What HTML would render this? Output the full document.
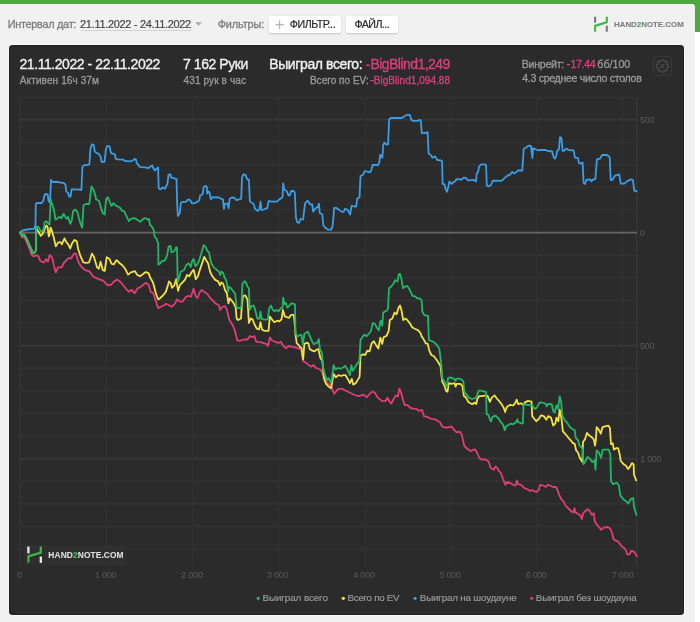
<!DOCTYPE html>
<html><head><meta charset="utf-8">
<style>
*{margin:0;padding:0;box-sizing:border-box}
html,body{width:700px;height:622px;overflow:hidden;background:#fff;font-family:"Liberation Sans",sans-serif}
.abs{position:absolute;white-space:nowrap}
#topbar{position:absolute;left:0;top:0;width:700px;height:4px;background:#4caa3c}
#rightgreen{position:absolute;left:688px;top:0;width:12px;height:31.5px;background:#4caa3c}
#light{position:absolute;left:0;top:3.6px;width:695px;height:618.4px;background:#f1f1f1;border-top-right-radius:3.5px;box-shadow:inset 0 1px 0 #fcfcfc}
.lbl{color:#8a8a8a;font-size:11px}
.btn{position:absolute;background:#fff;border-radius:2px;box-shadow:0 1px 2px rgba(0,0,0,.18)}
#panel{position:absolute;left:9px;top:45px;width:675px;height:570px;background:#2b2b2b;border-radius:4px;box-shadow:0 0 0 1px rgba(255,255,255,.6),inset 0 0 1px 0.6px #1f1f1f}
.w{color:#eeeeee}
.g{color:#9a9a9a}
.p{color:#e0457c}
.xl{position:absolute;top:569px;transform:translateX(-50%);color:#5c5c5c;font-size:9px;white-space:nowrap}
.yl{position:absolute;left:641px;color:#5c5c5c;font-size:9px;white-space:nowrap}
.lg{position:absolute;top:593px;font-size:9.4px;color:#9c9c9c;white-space:nowrap}
.dot{display:inline-block;width:3.5px;height:3.5px;border-radius:50%;vertical-align:middle;margin-right:3px;position:relative;top:-1px}
</style></head><body>
<div id="topbar"></div>
<div id="rightgreen"></div>
<div id="light"></div>

<div class="abs" style="left:81px;top:29.5px;width:109.5px;height:1.3px;background:#d2d2d2"></div>
<svg class="abs" style="left:195px;top:22px" width="8" height="5"><path d="M0 0 L7 0 L3.5 4 Z" fill="#b0b0b0"/></svg>
<div class="btn" style="left:269px;top:16px;width:72px;height:17px"></div>
<svg class="abs" style="left:275px;top:19.8px" width="10" height="10"><path d="M4.7 0.5 V9 M0.5 4.7 H9" stroke="#a5a5a5" stroke-width="1"/></svg>
<div class="btn" style="left:346px;top:16px;width:52px;height:17px"></div>

<svg class="abs" style="left:590px;top:14px" width="22" height="20">
<path d="M5.1 2.7 V8.7" stroke="#7a7a7a" stroke-width="2.1"/>
<path d="M16.8 17.7 V11.7" stroke="#7a7a7a" stroke-width="2.1"/>
<path d="M5.1 17.7 V11.9 L16.8 8.3 V2.7" stroke="#3cb54a" stroke-width="2.1" fill="none"/>
</svg>

<div id="panel"></div>
<div class="abs" style="left:653.3px;top:56.2px;width:19px;height:19.4px;border:1.5px solid #383838;border-radius:2.5px"></div>
<svg class="abs" style="left:0;top:0" width="700" height="622"><path d="M668.60 66.00 L668.60 66.08 L668.59 66.16 L668.58 66.24 L668.57 66.32 L668.55 66.40 L668.53 66.47 L668.50 66.55 L668.48 66.63 L668.44 66.70 L668.41 66.78 L668.36 66.85 L668.32 66.92 L668.27 66.99 L668.22 67.06 L668.17 67.13 L668.11 67.19 L668.04 67.25 L667.98 67.32 L667.91 67.37 L667.84 67.43 L667.76 67.48 L667.68 67.53 L667.59 67.58 L667.50 67.63 L667.41 67.67 L667.31 67.70 L667.20 67.73 L667.08 67.76 L666.95 67.78 L666.75 67.76 L666.90 67.89 L666.98 68.00 L667.05 68.10 L667.10 68.20 L667.15 68.29 L667.19 68.39 L667.22 68.48 L667.24 68.58 L667.27 68.67 L667.28 68.76 L667.30 68.85 L667.30 68.94 L667.31 69.03 L667.31 69.12 L667.30 69.21 L667.30 69.30 L667.28 69.38 L667.27 69.46 L667.25 69.55 L667.23 69.63 L667.20 69.70 L667.17 69.78 L667.14 69.86 L667.10 69.93 L667.06 70.00 L667.02 70.07 L666.97 70.13 L666.92 70.20 L666.87 70.26 L666.81 70.31 L666.76 70.37 L666.70 70.42 L666.63 70.47 L666.57 70.52 L666.50 70.56 L666.43 70.60 L666.36 70.64 L666.28 70.67 L666.20 70.70 L666.13 70.73 L666.05 70.75 L665.96 70.77 L665.88 70.78 L665.80 70.80 L665.71 70.80 L665.62 70.81 L665.53 70.81 L665.44 70.80 L665.35 70.80 L665.26 70.78 L665.17 70.77 L665.08 70.74 L664.98 70.72 L664.89 70.69 L664.79 70.65 L664.70 70.60 L664.60 70.55 L664.50 70.48 L664.39 70.40 L664.26 70.25 L664.28 70.45 L664.26 70.58 L664.23 70.70 L664.20 70.81 L664.17 70.91 L664.13 71.00 L664.08 71.09 L664.03 71.18 L663.98 71.26 L663.93 71.34 L663.87 71.41 L663.82 71.48 L663.75 71.54 L663.69 71.61 L663.63 71.67 L663.56 71.72 L663.49 71.77 L663.42 71.82 L663.35 71.86 L663.28 71.91 L663.20 71.94 L663.13 71.98 L663.05 72.00 L662.97 72.03 L662.90 72.05 L662.82 72.07 L662.74 72.08 L662.66 72.09 L662.58 72.10 L662.50 72.10 L662.42 72.10 L662.34 72.09 L662.26 72.08 L662.18 72.07 L662.10 72.05 L662.03 72.03 L661.95 72.00 L661.87 71.98 L661.80 71.94 L661.72 71.91 L661.65 71.86 L661.58 71.82 L661.51 71.77 L661.44 71.72 L661.37 71.67 L661.31 71.61 L661.25 71.54 L661.18 71.48 L661.13 71.41 L661.07 71.34 L661.02 71.26 L660.97 71.18 L660.92 71.09 L660.87 71.00 L660.83 70.91 L660.80 70.81 L660.77 70.70 L660.74 70.58 L660.72 70.45 L660.74 70.25 L660.61 70.40 L660.50 70.48 L660.40 70.55 L660.30 70.60 L660.21 70.65 L660.11 70.69 L660.02 70.72 L659.92 70.74 L659.83 70.77 L659.74 70.78 L659.65 70.80 L659.56 70.80 L659.47 70.81 L659.38 70.81 L659.29 70.80 L659.20 70.80 L659.12 70.78 L659.04 70.77 L658.95 70.75 L658.87 70.73 L658.80 70.70 L658.72 70.67 L658.64 70.64 L658.57 70.60 L658.50 70.56 L658.43 70.52 L658.37 70.47 L658.30 70.42 L658.24 70.37 L658.19 70.31 L658.13 70.26 L658.08 70.20 L658.03 70.13 L657.98 70.07 L657.94 70.00 L657.90 69.93 L657.86 69.86 L657.83 69.78 L657.80 69.70 L657.77 69.63 L657.75 69.55 L657.73 69.46 L657.72 69.38 L657.70 69.30 L657.70 69.21 L657.69 69.12 L657.69 69.03 L657.70 68.94 L657.70 68.85 L657.72 68.76 L657.73 68.67 L657.76 68.58 L657.78 68.48 L657.81 68.39 L657.85 68.29 L657.90 68.20 L657.95 68.10 L658.02 68.00 L658.10 67.89 L658.25 67.76 L658.05 67.78 L657.92 67.76 L657.80 67.73 L657.69 67.70 L657.59 67.67 L657.50 67.63 L657.41 67.58 L657.32 67.53 L657.24 67.48 L657.16 67.43 L657.09 67.37 L657.02 67.32 L656.96 67.25 L656.89 67.19 L656.83 67.13 L656.78 67.06 L656.73 66.99 L656.68 66.92 L656.64 66.85 L656.59 66.78 L656.56 66.70 L656.52 66.63 L656.50 66.55 L656.47 66.47 L656.45 66.40 L656.43 66.32 L656.42 66.24 L656.41 66.16 L656.40 66.08 L656.40 66.00 L656.40 65.92 L656.41 65.84 L656.42 65.76 L656.43 65.68 L656.45 65.60 L656.47 65.53 L656.50 65.45 L656.52 65.37 L656.56 65.30 L656.59 65.22 L656.64 65.15 L656.68 65.08 L656.73 65.01 L656.78 64.94 L656.83 64.87 L656.89 64.81 L656.96 64.75 L657.02 64.68 L657.09 64.63 L657.16 64.57 L657.24 64.52 L657.32 64.47 L657.41 64.42 L657.50 64.37 L657.59 64.33 L657.69 64.30 L657.80 64.27 L657.92 64.24 L658.05 64.22 L658.25 64.24 L658.10 64.11 L658.02 64.00 L657.95 63.90 L657.90 63.80 L657.85 63.71 L657.81 63.61 L657.78 63.52 L657.76 63.42 L657.73 63.33 L657.72 63.24 L657.70 63.15 L657.70 63.06 L657.69 62.97 L657.69 62.88 L657.70 62.79 L657.70 62.70 L657.72 62.62 L657.73 62.54 L657.75 62.45 L657.77 62.37 L657.80 62.30 L657.83 62.22 L657.86 62.14 L657.90 62.07 L657.94 62.00 L657.98 61.93 L658.03 61.87 L658.08 61.80 L658.13 61.74 L658.19 61.69 L658.24 61.63 L658.30 61.58 L658.37 61.53 L658.43 61.48 L658.50 61.44 L658.57 61.40 L658.64 61.36 L658.72 61.33 L658.80 61.30 L658.87 61.27 L658.95 61.25 L659.04 61.23 L659.12 61.22 L659.20 61.20 L659.29 61.20 L659.38 61.19 L659.47 61.19 L659.56 61.20 L659.65 61.20 L659.74 61.22 L659.83 61.23 L659.92 61.26 L660.02 61.28 L660.11 61.31 L660.21 61.35 L660.30 61.40 L660.40 61.45 L660.50 61.52 L660.61 61.60 L660.74 61.75 L660.72 61.55 L660.74 61.42 L660.77 61.30 L660.80 61.19 L660.83 61.09 L660.87 61.00 L660.92 60.91 L660.97 60.82 L661.02 60.74 L661.07 60.66 L661.13 60.59 L661.18 60.52 L661.25 60.46 L661.31 60.39 L661.37 60.33 L661.44 60.28 L661.51 60.23 L661.58 60.18 L661.65 60.14 L661.72 60.09 L661.80 60.06 L661.87 60.02 L661.95 60.00 L662.03 59.97 L662.10 59.95 L662.18 59.93 L662.26 59.92 L662.34 59.91 L662.42 59.90 L662.50 59.90 L662.58 59.90 L662.66 59.91 L662.74 59.92 L662.82 59.93 L662.90 59.95 L662.97 59.97 L663.05 60.00 L663.13 60.02 L663.20 60.06 L663.28 60.09 L663.35 60.14 L663.42 60.18 L663.49 60.23 L663.56 60.28 L663.63 60.33 L663.69 60.39 L663.75 60.46 L663.82 60.52 L663.87 60.59 L663.93 60.66 L663.98 60.74 L664.03 60.82 L664.08 60.91 L664.13 61.00 L664.17 61.09 L664.20 61.19 L664.23 61.30 L664.26 61.42 L664.28 61.55 L664.26 61.75 L664.39 61.60 L664.50 61.52 L664.60 61.45 L664.70 61.40 L664.79 61.35 L664.89 61.31 L664.98 61.28 L665.08 61.26 L665.17 61.23 L665.26 61.22 L665.35 61.20 L665.44 61.20 L665.53 61.19 L665.62 61.19 L665.71 61.20 L665.80 61.20 L665.88 61.22 L665.96 61.23 L666.05 61.25 L666.13 61.27 L666.20 61.30 L666.28 61.33 L666.36 61.36 L666.43 61.40 L666.50 61.44 L666.57 61.48 L666.63 61.53 L666.70 61.58 L666.76 61.63 L666.81 61.69 L666.87 61.74 L666.92 61.80 L666.97 61.87 L667.02 61.93 L667.06 62.00 L667.10 62.07 L667.14 62.14 L667.17 62.22 L667.20 62.30 L667.23 62.37 L667.25 62.45 L667.27 62.54 L667.28 62.62 L667.30 62.70 L667.30 62.79 L667.31 62.88 L667.31 62.97 L667.30 63.06 L667.30 63.15 L667.28 63.24 L667.27 63.33 L667.24 63.42 L667.22 63.52 L667.19 63.61 L667.15 63.71 L667.10 63.80 L667.05 63.90 L666.98 64.00 L666.90 64.11 L666.75 64.24 L666.95 64.22 L667.08 64.24 L667.20 64.27 L667.31 64.30 L667.41 64.33 L667.50 64.37 L667.59 64.42 L667.68 64.47 L667.76 64.52 L667.84 64.57 L667.91 64.63 L667.98 64.68 L668.04 64.75 L668.11 64.81 L668.17 64.87 L668.22 64.94 L668.27 65.01 L668.32 65.08 L668.36 65.15 L668.41 65.22 L668.44 65.30 L668.48 65.37 L668.50 65.45 L668.53 65.53 L668.55 65.60 L668.57 65.68 L668.58 65.76 L668.59 65.84 L668.60 65.92Z" fill="none" stroke="#4a4a4a" stroke-width="1.3" stroke-linejoin="round"/><circle cx="662.5" cy="66" r="1.5" fill="none" stroke="#4a4a4a" stroke-width="1.2"/></svg>

<svg class="abs" style="left:0;top:0" width="700" height="622">
<line x1="20.4" x2="20.4" y1="97.4" y2="566.6" stroke="#333" stroke-width="1.5"/>
<line x1="636.8" x2="636.8" y1="97.4" y2="566.6" stroke="#353535" stroke-width="1.6"/>
<line x1="20.4" x2="637" y1="97.6" y2="97.6" stroke="#333" stroke-width="1.5"/>
<line x1="20" x2="637" y1="119.6" y2="119.6" stroke="#383838" stroke-width="1.6"/>
<line x1="20" x2="637" y1="142.2" y2="142.2" stroke="#323232" stroke-width="1.6"/>
<line x1="20" x2="637" y1="164.8" y2="164.8" stroke="#323232" stroke-width="1.6"/>
<line x1="20" x2="637" y1="187.4" y2="187.4" stroke="#323232" stroke-width="1.6"/>
<line x1="20" x2="637" y1="210.0" y2="210.0" stroke="#323232" stroke-width="1.6"/>
<line x1="20" x2="637" y1="255.2" y2="255.2" stroke="#323232" stroke-width="1.6"/>
<line x1="20" x2="637" y1="277.8" y2="277.8" stroke="#323232" stroke-width="1.6"/>
<line x1="20" x2="637" y1="300.4" y2="300.4" stroke="#323232" stroke-width="1.6"/>
<line x1="20" x2="637" y1="323.0" y2="323.0" stroke="#323232" stroke-width="1.6"/>
<line x1="20" x2="637" y1="345.6" y2="345.6" stroke="#383838" stroke-width="1.6"/>
<line x1="20" x2="637" y1="368.2" y2="368.2" stroke="#323232" stroke-width="1.6"/>
<line x1="20" x2="637" y1="390.8" y2="390.8" stroke="#323232" stroke-width="1.6"/>
<line x1="20" x2="637" y1="413.4" y2="413.4" stroke="#323232" stroke-width="1.6"/>
<line x1="20" x2="637" y1="436.0" y2="436.0" stroke="#323232" stroke-width="1.6"/>
<line x1="20" x2="637" y1="458.6" y2="458.6" stroke="#383838" stroke-width="1.6"/>
<line x1="20" x2="637" y1="481.2" y2="481.2" stroke="#323232" stroke-width="1.6"/>
<line x1="20" x2="637" y1="503.8" y2="503.8" stroke="#323232" stroke-width="1.6"/>
<line x1="20" x2="637" y1="526.4" y2="526.4" stroke="#323232" stroke-width="1.6"/>
<line x1="20" x2="637" y1="549.0" y2="549.0" stroke="#323232" stroke-width="1.6"/>
<line x1="106.47" x2="106.47" y1="97" y2="566.6" stroke="#303030" stroke-width="1.5"/>
<line x1="192.54" x2="192.54" y1="97" y2="566.6" stroke="#303030" stroke-width="1.5"/>
<line x1="278.61" x2="278.61" y1="97" y2="566.6" stroke="#303030" stroke-width="1.5"/>
<line x1="364.68" x2="364.68" y1="97" y2="566.6" stroke="#303030" stroke-width="1.5"/>
<line x1="450.75" x2="450.75" y1="97" y2="566.6" stroke="#303030" stroke-width="1.5"/>
<line x1="536.82" x2="536.82" y1="97" y2="566.6" stroke="#303030" stroke-width="1.5"/>
<line x1="622.89" x2="622.89" y1="97" y2="566.6" stroke="#303030" stroke-width="1.5"/>
<line x1="20" x2="637" y1="232.6" y2="232.6" stroke="#676767" stroke-width="1.9"/>
<rect x="24" y="544.5" width="103" height="21" fill="#2f2f2f"/>
<path d="M20.2 232.3 L23.0 230.3 L27.1 229.5 L34.3 228.7 L35.5 225.0 L35.8 203.7 L37.2 203.0 L41.6 203.0 L43.3 200.8 L44.5 195.0 L45.9 194.0 L47.7 194.3 L48.5 200.8 L49.5 202.3 L50.3 195.8 L51.0 179.9 L51.7 181.0 L53.2 182.0 L58.9 182.0 L60.4 182.7 L64.0 183.0 L65.5 184.9 L66.2 191.4 L67.9 192.9 L69.1 196.5 L70.5 196.5 L71.7 189.3 L73.4 189.3 L79.9 189.7 L81.4 190.0 L82.4 166.8 L83.8 165.4 L89.3 164.7 L90.5 148.7 L91.9 144.4 L93.7 144.8 L94.8 151.6 L96.8 153.1 L98.7 153.8 L100.6 156.7 L101.6 161.8 L104.5 161.8 L106.0 148.7 L107.4 145.9 L109.6 146.3 L111.0 153.1 L113.6 153.8 L115.0 154.5 L115.7 158.9 L117.9 159.3 L123.0 159.6 L125.1 161.0 L130.9 161.3 L133.1 160.3 L134.5 158.9 L136.0 159.6 L136.7 163.2 L138.2 164.7 L139.6 166.8 L141.8 167.1 L146.8 167.6 L148.3 168.3 L150.5 166.5 L152.3 165.4 L153.3 168.3 L154.8 170.5 L157.0 168.3 L158.1 167.6 L158.7 188.5 L160.6 189.3 L162.7 187.4 L164.9 188.8 L166.4 185.6 L167.4 184.2 L168.5 174.8 L170.3 174.1 L171.4 177.7 L173.6 178.1 L176.5 179.1 L177.2 204.5 L177.9 216.0 L179.8 213.1 L180.8 203.0 L183.0 201.8 L185.9 201.8 L188.1 199.4 L190.2 200.1 L191.7 203.0 L193.9 203.3 L197.5 201.8 L199.2 200.4 L200.0 195.8 L201.4 195.0 L202.9 193.6 L203.6 187.1 L205.8 185.9 L206.9 187.1 L207.2 193.6 L208.4 191.4 L209.4 192.2 L210.9 199.4 L212.3 197.2 L218.8 197.5 L221.0 198.7 L222.9 199.4 L223.9 208.8 L224.9 203.7 L227.5 203.7 L228.6 208.1 L229.7 198.7 L231.8 197.5 L234.7 197.9 L236.2 200.1 L239.1 199.4 L241.2 198.7 L242.0 177.7 L243.4 174.4 L245.6 174.8 L247.0 179.1 L248.9 179.9 L249.9 201.6 L252.1 203.0 L253.5 203.7 L255.0 208.8 L257.9 211.0 L259.3 209.5 L260.5 201.6 L261.5 210.2 L263.7 209.5 L267.3 208.1 L268.7 200.8 L271.6 201.6 L276.7 201.6 L279.3 199.4 L282.5 197.2 L283.2 183.5 L284.2 189.3 L285.0 189.9 L286.7 191.0 L288.6 195.6 L290.1 194.9 L291.1 191.0 L293.7 191.0 L294.8 192.7 L295.9 217.3 L297.3 222.4 L299.2 222.8 L300.6 218.8 L303.1 219.5 L305.0 203.6 L307.4 200.7 L308.9 202.2 L309.9 204.3 L312.2 204.3 L313.2 211.6 L314.7 209.4 L316.1 207.9 L318.0 206.9 L319.0 203.6 L319.7 213.0 L322.3 214.2 L323.3 225.3 L325.5 227.8 L327.7 229.6 L331.3 229.6 L332.7 225.3 L334.2 207.9 L336.4 207.9 L338.5 209.4 L341.4 211.6 L343.6 211.8 L345.0 208.7 L347.9 210.1 L350.1 214.5 L351.6 205.8 L354.2 206.5 L356.2 206.5 L357.3 198.5 L359.5 197.4 L360.5 176.1 L363.1 174.7 L364.9 171.0 L368.2 171.8 L370.0 172.3 L371.4 170.1 L372.6 165.0 L378.0 165.0 L379.4 162.2 L380.1 154.9 L381.3 155.6 L382.3 157.8 L383.3 144.8 L384.5 142.6 L386.2 144.4 L388.1 144.4 L389.1 119.5 L391.0 118.0 L401.8 118.0 L404.0 116.6 L406.9 114.8 L409.8 114.8 L411.2 119.5 L412.7 120.9 L417.7 120.9 L419.9 119.8 L420.9 120.9 L421.8 133.2 L424.3 133.2 L427.6 132.2 L428.6 153.5 L430.8 154.9 L432.5 157.8 L435.1 156.4 L437.3 160.0 L440.9 160.3 L442.1 161.4 L442.6 183.9 L444.5 184.3 L445.5 188.9 L447.0 191.8 L448.4 186.8 L449.3 181.7 L451.8 183.9 L453.9 181.7 L455.0 181.4 L456.4 179.2 L461.5 179.5 L463.7 177.7 L465.9 178.0 L468.0 180.4 L473.8 179.9 L476.0 181.4 L476.7 173.4 L478.2 172.0 L478.9 166.9 L481.0 164.4 L485.4 164.4 L486.1 166.2 L486.8 185.7 L489.0 186.4 L490.9 185.0 L492.9 180.6 L501.3 180.9 L503.5 179.2 L505.6 177.0 L507.8 175.6 L510.0 174.6 L512.2 172.0 L514.3 173.4 L516.5 172.0 L517.9 170.5 L522.3 170.5 L523.7 148.8 L525.9 147.7 L528.8 145.6 L531.0 145.9 L532.4 158.2 L533.1 148.1 L536.0 149.5 L538.2 150.3 L540.0 150.0 L545.7 150.0 L547.9 151.0 L552.1 151.4 L553.6 157.1 L555.0 158.6 L556.4 155.7 L557.1 150.7 L558.9 149.6 L560.0 137.1 L561.4 137.9 L562.6 150.7 L563.6 151.0 L566.4 148.6 L568.6 150.0 L573.6 150.4 L575.0 157.6 L577.9 157.9 L578.9 162.9 L580.7 163.6 L582.6 162.4 L583.6 182.9 L585.0 183.9 L586.4 180.0 L590.0 179.3 L591.4 181.4 L592.9 179.6 L595.4 179.0 L596.9 159.3 L600.0 158.6 L602.1 155.0 L607.1 155.0 L609.7 157.1 L610.7 180.0 L612.1 180.0 L615.0 175.7 L619.3 174.3 L620.7 183.6 L624.3 183.6 L627.1 181.4 L630.7 179.3 L632.9 180.0 L634.3 190.7 L636.4 191.4 L636.6 191.1" fill="none" stroke="#3a9de8" stroke-width="1.8" stroke-linejoin="round" stroke-linecap="round"/>
<path d="M20.2 232.3 L22.2 237.1 L24.6 237.5 L27.1 243.1 L29.5 248.8 L31.5 254.4 L33.5 256.4 L36.7 255.2 L38.7 256.8 L40.3 260.8 L42.3 262.0 L44.3 262.4 L45.9 259.2 L47.9 261.6 L49.6 255.2 L50.0 255.0 L52.2 257.9 L54.1 265.9 L55.8 272.4 L58.0 267.3 L61.6 267.3 L63.7 263.0 L66.6 260.1 L68.8 257.9 L71.0 258.7 L73.9 253.6 L76.0 253.6 L77.5 259.4 L78.9 263.0 L81.8 267.3 L85.5 270.2 L89.8 271.7 L92.7 276.0 L96.3 278.2 L99.9 279.6 L102.8 280.4 L105.0 282.5 L107.2 285.0 L110.8 285.0 L114.4 281.1 L117.3 279.6 L120.2 281.8 L122.3 284.0 L123.0 285.0 L126.0 288.8 L128.8 291.7 L131.7 289.8 L134.5 293.1 L135.0 292.9 L137.2 288.6 L140.1 287.2 L143.0 285.0 L145.9 282.8 L148.7 285.0 L150.9 292.2 L153.1 292.9 L155.3 299.5 L158.2 308.1 L161.0 306.7 L163.9 305.2 L166.1 303.8 L169.0 305.2 L171.9 306.7 L174.8 303.8 L177.0 299.5 L179.9 301.6 L182.7 301.6 L185.6 297.3 L188.5 295.8 L191.1 296.6 L193.6 288.6 L195.5 295.8 L197.5 298.0 L199.8 292.2 L201.8 290.0 L204.5 292.2 L207.3 293.7 L210.2 298.0 L213.1 300.9 L216.0 303.8 L218.9 305.2 L220.0 309.9 L222.2 307.0 L225.1 306.2 L226.9 309.9 L229.4 320.0 L233.0 325.8 L235.2 331.6 L237.1 340.2 L239.5 341.0 L243.9 339.5 L247.5 339.5 L250.1 335.9 L252.1 337.3 L254.4 335.9 L256.2 341.7 L261.2 342.4 L266.3 343.9 L268.0 346.0 L269.9 337.3 L271.8 340.2 L275.0 341.7 L278.6 343.1 L280.8 341.7 L282.9 345.3 L285.8 348.2 L288.7 346.0 L292.3 346.8 L296.0 347.5 L299.3 348.9 L300.0 347.7 L301.4 349.9 L302.9 360.8 L305.1 362.2 L308.0 364.4 L310.9 366.6 L313.7 365.1 L315.9 368.0 L320.3 369.5 L321.7 371.6 L323.9 376.7 L326.0 381.8 L328.2 383.9 L331.1 385.4 L332.6 390.0 L334.3 393.9 L337.6 389.4 L342.2 388.7 L345.5 390.5 L350.0 392.8 L354.5 395.0 L359.0 396.2 L363.5 394.6 L366.9 397.3 L370.0 393.5 L372.3 391.6 L374.8 392.5 L376.8 396.4 L379.6 399.3 L382.5 401.2 L385.4 401.2 L387.4 397.8 L389.3 401.2 L391.2 403.5 L394.1 398.3 L396.0 395.4 L398.0 396.4 L399.3 388.7 L400.9 391.6 L402.8 399.3 L404.7 405.1 L407.6 405.1 L410.5 408.0 L413.4 408.6 L416.3 408.9 L419.2 410.9 L422.1 409.9 L424.0 416.3 L426.9 416.7 L430.8 418.6 L435.6 419.6 L438.5 421.5 L440.0 422.2 L442.2 426.5 L444.3 427.5 L447.2 427.5 L451.6 426.5 L453.7 429.4 L456.6 432.3 L459.5 431.6 L461.7 434.5 L464.3 446.0 L466.8 448.2 L470.4 451.1 L474.0 449.6 L475.0 449.3 L477.2 453.0 L479.3 458.0 L481.5 459.5 L485.1 459.5 L488.0 460.9 L489.5 463.8 L490.2 467.4 L492.4 468.9 L493.8 469.6 L495.5 466.4 L497.4 468.2 L498.9 471.0 L501.0 473.2 L502.8 478.3 L504.2 481.9 L505.4 484.8 L507.1 481.9 L510.5 483.3 L513.3 484.8 L515.5 485.5 L517.0 480.5 L518.1 484.1 L521.0 484.8 L524.9 488.4 L527.1 489.1 L530.0 491.0 L532.2 490.1 L534.3 491.3 L536.5 492.0 L538.7 489.9 L540.1 484.8 L543.0 485.5 L545.9 487.0 L547.6 484.8 L550.0 485.5 L553.1 487.0 L556.0 487.0 L557.2 489.3 L559.3 495.1 L561.5 499.5 L563.7 501.6 L565.4 505.3 L568.0 508.2 L570.9 511.0 L573.1 512.5 L574.5 508.2 L575.3 512.5 L578.2 513.9 L580.3 515.4 L581.8 519.0 L583.2 513.2 L585.4 511.0 L587.6 509.3 L589.7 511.0 L591.9 514.7 L593.8 513.2 L594.8 521.2 L597.0 524.8 L599.1 527.0 L601.3 529.9 L603.5 527.7 L607.8 527.0 L610.0 528.4 L611.4 531.3 L612.2 533.5 L613.6 539.3 L615.8 540.7 L617.9 541.4 L620.1 544.3 L622.7 547.2 L625.2 548.7 L627.3 554.5 L629.5 554.2 L631.4 550.8 L633.9 551.6 L636.8 555.9 L636.9 556.4" fill="none" stroke="#e03d77" stroke-width="1.8" stroke-linejoin="round" stroke-linecap="round"/>
<path d="M20.2 232.7 L22.2 235.9 L23.8 234.3 L25.5 236.7 L27.9 241.5 L29.5 245.5 L31.1 248.8 L32.7 253.2 L34.7 252.4 L35.9 250.4 L36.3 227.1 L36.7 228.7 L39.1 232.7 L40.7 235.9 L42.3 234.3 L43.9 231.1 L45.1 227.9 L46.5 225.5 L47.6 227.1 L48.8 236.3 L49.6 234.3 L50.4 227.9 L50.7 227.6 L52.2 231.9 L53.6 237.0 L55.8 246.4 L58.0 242.7 L60.1 242.0 L61.9 244.2 L64.5 238.4 L66.2 242.0 L68.1 244.2 L70.3 248.5 L72.0 243.5 L74.6 239.9 L76.8 241.3 L78.2 249.3 L80.4 255.8 L83.3 262.3 L86.2 263.0 L89.1 262.3 L92.0 253.6 L94.1 257.2 L97.0 267.3 L98.9 268.8 L100.6 261.6 L102.8 270.2 L104.7 271.0 L106.7 257.2 L109.3 258.7 L111.5 263.7 L113.7 264.5 L116.6 260.1 L119.5 263.0 L122.3 265.2 L125.2 268.8 L128.1 274.6 L131.0 272.4 L135.0 271.2 L137.2 274.9 L140.1 276.3 L143.0 274.1 L145.9 272.0 L148.7 273.4 L150.2 277.7 L151.6 279.9 L153.1 282.8 L156.0 293.7 L158.2 299.5 L160.3 298.0 L163.2 295.1 L165.7 292.2 L167.6 286.4 L169.0 281.4 L170.9 283.5 L171.9 287.9 L174.1 285.7 L176.2 279.2 L178.1 290.8 L179.9 285.0 L182.0 282.8 L184.9 279.9 L187.1 274.9 L189.3 276.3 L191.7 272.0 L193.6 269.8 L195.8 279.2 L197.9 276.3 L200.1 269.1 L202.3 262.6 L204.2 256.8 L206.2 260.4 L208.1 263.3 L210.2 272.0 L212.4 276.3 L215.3 279.9 L218.2 281.4 L220.0 285.3 L221.4 282.4 L223.2 283.8 L225.1 290.3 L226.9 293.2 L228.4 303.3 L229.8 298.3 L231.6 300.5 L233.7 303.3 L235.6 307.0 L236.6 318.5 L238.1 320.0 L241.0 318.5 L241.7 307.0 L242.9 296.1 L245.3 295.4 L247.5 299.7 L248.9 322.9 L250.7 318.5 L252.6 319.3 L254.4 324.3 L256.9 328.7 L259.1 329.4 L260.5 322.2 L262.0 329.4 L264.1 330.8 L268.5 330.8 L269.9 316.4 L272.4 320.0 L274.3 322.2 L277.2 320.7 L279.3 321.4 L281.5 319.3 L282.9 309.9 L284.8 316.4 L286.8 317.1 L289.2 317.8 L290.9 314.9 L293.8 314.9 L295.0 325.8 L295.5 334.5 L296.7 343.1 L298.9 345.3 L300.0 347.0 L301.4 347.7 L303.2 359.3 L304.3 344.1 L306.5 342.7 L308.4 343.4 L309.8 349.2 L312.3 350.6 L314.5 351.4 L316.2 349.9 L318.5 349.2 L320.3 357.9 L322.4 360.8 L323.9 378.1 L326.0 383.9 L328.9 386.8 L331.1 388.3 L333.6 373.8 L335.9 377.4 L338.3 375.2 L341.2 376.0 L343.4 375.2 L345.6 375.2 L347.7 378.9 L349.9 383.2 L351.8 378.9 L353.2 384.6 L355.7 383.2 L357.9 379.6 L359.6 376.7 L360.5 355.7 L362.9 354.3 L365.1 355.0 L367.3 350.6 L369.5 351.4 L371.6 343.4 L373.8 341.2 L376.0 344.9 L378.4 348.5 L380.3 337.6 L381.4 341.0 L382.2 343.9 L383.6 337.3 L386.5 335.9 L388.7 330.8 L389.8 320.0 L392.3 318.5 L394.5 312.7 L396.6 314.2 L398.5 307.7 L400.0 305.5 L401.4 309.9 L403.2 320.0 L405.8 318.5 L407.8 320.7 L410.1 323.6 L412.1 327.2 L414.7 328.7 L417.9 330.1 L420.5 333.0 L421.7 336.6 L423.4 338.8 L425.6 343.1 L427.7 343.9 L429.2 350.4 L431.4 355.0 L433.9 356.2 L437.3 360.7 L440.6 366.3 L442.2 381.6 L444.3 385.3 L446.1 391.0 L447.5 391.8 L448.7 383.1 L451.6 383.8 L454.5 383.1 L455.6 386.7 L456.6 383.8 L460.3 383.8 L462.4 386.0 L463.9 396.1 L466.0 397.6 L468.2 401.9 L470.4 403.3 L472.6 404.1 L474.7 402.6 L476.2 404.1 L477.3 399.0 L479.1 396.1 L482.0 396.1 L486.0 395.4 L487.7 396.1 L489.9 401.9 L491.8 397.6 L494.7 395.4 L497.2 399.0 L499.3 401.2 L501.5 404.1 L503.7 407.7 L505.1 412.0 L506.8 407.0 L510.2 404.8 L513.1 405.5 L515.0 403.3 L516.7 399.7 L518.1 404.1 L521.0 403.3 L523.2 404.8 L525.0 402.4 L527.9 400.9 L531.5 401.6 L532.2 416.1 L534.4 419.0 L536.3 421.2 L538.7 419.0 L540.9 415.4 L543.8 416.1 L546.4 419.7 L548.2 416.1 L551.0 417.6 L553.2 425.5 L555.4 423.3 L556.5 417.6 L558.3 421.2 L559.7 409.6 L561.5 419.0 L562.9 431.3 L565.5 434.2 L568.4 437.8 L570.0 439.5 L572.9 443.1 L574.7 443.8 L576.1 450.3 L578.0 452.5 L579.4 456.8 L580.8 459.7 L582.4 461.9 L583.0 442.0 L585.0 439.3 L586.9 432.9 L589.0 435.3 L591.4 436.9 L593.8 439.3 L595.0 445.7 L595.9 439.3 L596.6 427.2 L598.7 429.6 L600.8 433.7 L602.4 427.2 L605.1 426.4 L608.3 425.6 L609.9 428.0 L611.0 444.1 L612.7 443.3 L613.9 449.7 L616.4 448.1 L618.0 448.1 L619.6 453.8 L620.7 461.0 L623.6 464.2 L626.0 465.8 L628.1 469.0 L630.0 466.6 L631.9 463.1 L633.6 464.2 L634.0 474.7 L636.1 480.3 L636.4 480.3" fill="none" stroke="#f2e43c" stroke-width="1.8" stroke-linejoin="round" stroke-linecap="round"/>
<path d="M20.2 232.7 L22.2 235.9 L23.8 234.3 L25.5 236.7 L27.9 241.5 L29.5 245.5 L31.1 248.8 L32.7 253.2 L34.7 252.4 L35.9 250.4 L36.3 227.1 L38.3 226.7 L39.1 227.9 L40.7 231.1 L42.7 231.1 L43.9 227.9 L44.5 222.5 L46.2 221.1 L48.1 223.3 L49.5 224.7 L50.7 199.3 L51.4 202.2 L53.6 208.0 L55.5 219.6 L56.9 218.9 L59.4 216.7 L61.3 218.2 L63.7 213.8 L65.2 216.7 L66.6 218.9 L68.1 216.7 L70.3 223.9 L71.7 220.3 L73.2 210.9 L75.3 209.5 L77.5 212.4 L78.9 218.2 L80.4 223.2 L82.1 227.6 L83.6 205.1 L85.9 204.0 L88.8 204.0 L89.3 203.7 L91.5 186.4 L93.7 190.0 L95.8 197.2 L96.0 199.3 L98.9 200.8 L100.6 206.6 L102.8 213.1 L104.7 214.5 L106.1 199.3 L107.9 197.2 L109.6 201.5 L111.5 205.9 L113.4 203.0 L115.1 205.1 L118.0 206.6 L120.2 208.0 L122.3 210.9 L124.5 211.6 L126.0 215.3 L128.9 221.0 L131.0 218.9 L133.9 218.2 L136.1 218.9 L136.7 219.6 L140.3 221.8 L143.2 218.9 L145.4 218.2 L147.6 219.6 L149.0 218.9 L150.0 225.0 L151.4 226.0 L153.8 230.0 L154.5 235.8 L155.5 238.0 L156.7 238.7 L157.4 241.6 L158.2 243.0 L158.4 264.7 L160.3 263.3 L161.8 261.1 L163.9 261.1 L165.7 258.9 L167.1 255.3 L168.6 246.6 L170.5 245.9 L171.5 252.4 L173.3 251.7 L174.8 250.3 L176.2 247.1 L177.0 248.1 L177.7 282.1 L179.1 278.5 L180.6 272.0 L184.2 269.8 L186.4 264.7 L188.8 263.3 L190.7 266.9 L192.2 261.1 L193.6 258.9 L195.5 266.2 L197.2 264.7 L199.4 259.7 L201.8 251.7 L203.7 245.2 L205.9 247.4 L207.3 251.0 L209.1 252.4 L210.2 258.9 L211.7 264.0 L213.9 267.6 L216.8 269.8 L219.6 272.7 L220.0 275.1 L221.4 271.5 L223.2 273.0 L224.3 277.3 L225.8 279.5 L226.9 283.1 L228.0 291.8 L229.0 286.7 L230.9 288.2 L233.0 291.0 L235.2 293.9 L236.6 307.0 L238.1 308.4 L240.3 307.7 L241.4 306.2 L242.4 283.8 L244.6 281.2 L246.0 282.4 L247.5 286.7 L248.9 288.2 L249.7 309.9 L251.5 306.2 L253.6 305.5 L254.7 308.4 L255.9 312.7 L257.3 318.5 L259.4 318.8 L260.5 311.3 L261.7 318.8 L264.1 319.7 L267.7 319.3 L269.2 308.4 L270.9 305.5 L272.4 309.1 L274.3 311.3 L276.4 309.9 L278.6 311.3 L280.5 308.4 L282.5 307.7 L283.2 297.6 L284.4 304.1 L285.8 302.9 L287.3 307.7 L289.5 305.5 L291.2 303.3 L293.8 303.8 L295.0 304.8 L295.5 333.0 L297.4 336.6 L299.3 335.2 L300.0 335.5 L301.4 334.7 L302.9 344.9 L304.3 334.0 L306.1 332.6 L308.0 331.8 L309.8 336.2 L311.6 340.5 L313.7 344.1 L315.2 343.4 L317.4 342.7 L318.8 339.1 L320.0 349.9 L321.7 352.1 L323.2 368.0 L325.3 376.0 L327.5 380.3 L328.9 378.1 L330.4 382.5 L331.5 381.0 L333.6 365.1 L335.5 369.5 L337.9 368.0 L340.5 368.7 L343.4 367.3 L345.1 365.8 L347.0 368.7 L349.9 375.2 L351.4 365.1 L352.8 370.9 L355.0 367.3 L357.2 363.7 L359.3 361.5 L360.5 339.8 L362.5 336.9 L364.4 334.7 L366.6 336.2 L369.2 333.3 L371.2 330.4 L372.6 323.2 L375.0 323.9 L376.7 327.5 L378.9 330.4 L380.3 321.7 L381.2 320.7 L382.2 325.8 L383.2 312.7 L385.1 311.3 L386.9 310.6 L388.0 308.4 L389.0 288.2 L390.9 286.7 L393.0 284.5 L395.2 280.2 L397.4 281.6 L398.8 274.4 L400.0 273.7 L401.4 278.7 L402.9 288.2 L404.9 286.7 L407.2 286.0 L408.9 288.2 L410.7 291.8 L412.6 296.1 L414.7 296.1 L416.9 298.0 L419.8 298.6 L421.7 300.5 L422.3 311.3 L424.1 314.9 L426.0 315.6 L428.0 315.6 L428.9 340.2 L431.4 341.0 L434.3 342.4 L437.2 345.3 L439.3 348.9 L441.4 365.0 L442.2 378.7 L444.3 380.9 L446.1 386.0 L447.2 386.7 L448.0 378.0 L450.1 377.3 L453.7 378.7 L455.6 380.9 L456.2 378.7 L458.8 378.7 L461.7 379.5 L463.4 381.6 L464.3 391.8 L466.0 393.9 L468.9 397.6 L471.8 399.0 L474.7 398.3 L476.9 396.1 L477.9 392.5 L479.1 390.3 L482.0 391.0 L486.0 391.8 L486.6 414.2 L488.5 414.9 L489.9 419.3 L490.9 421.4 L492.4 417.1 L495.0 415.6 L496.4 416.4 L498.6 418.5 L500.8 422.2 L502.9 424.3 L504.8 430.1 L506.3 425.8 L508.7 425.0 L510.9 423.6 L513.1 424.3 L516.0 422.2 L517.4 419.3 L518.1 422.2 L520.3 422.9 L522.8 423.6 L523.6 404.1 L525.0 404.5 L532.2 405.3 L533.4 407.0 L534.8 408.9 L536.6 407.9 L539.5 402.7 L541.6 402.4 L545.3 403.5 L546.7 406.4 L548.2 403.8 L551.8 404.5 L553.2 411.0 L554.7 412.5 L556.5 405.3 L558.0 408.9 L559.7 396.3 L561.2 402.4 L562.3 415.4 L564.4 419.7 L567.0 422.6 L569.9 427.0 L570.0 427.2 L572.9 429.3 L574.7 430.1 L575.8 438.0 L578.0 440.2 L579.4 445.3 L581.2 447.1 L582.7 448.9 L583.4 464.1 L584.8 462.6 L585.0 461.8 L587.4 457.0 L589.8 458.6 L592.2 462.1 L594.6 460.2 L595.5 469.8 L596.6 450.5 L598.7 452.2 L601.1 457.8 L602.7 449.7 L606.7 449.7 L608.8 449.7 L610.4 454.6 L611.0 481.1 L613.1 484.3 L616.4 482.7 L618.8 485.1 L620.4 495.6 L623.6 499.6 L626.0 501.2 L628.4 503.6 L630.8 498.8 L633.2 498.0 L634.0 506.8 L636.4 514.9" fill="none" stroke="#22b668" stroke-width="1.8" stroke-linejoin="round" stroke-linecap="round"/>
</svg>
<svg class="abs" style="left:24px;top:545px" width="22" height="20">
<path d="M4.4 1.6 V8.4" stroke="#e8e8e8" stroke-width="2.3"/>
<path d="M16.8 17.9 V11.6" stroke="#e8e8e8" stroke-width="2.3"/>
<path d="M4.4 17.6 V11.4 L16.8 7.6 V1.6" stroke="#3cb54a" stroke-width="2.3" fill="none"/>
</svg>


<svg class="abs" style="left:0;top:0" width="700" height="622"><circle cx="258.2" cy="598.3" r="1.6" fill="#22b668"/><circle cx="343.3" cy="598.3" r="1.6" fill="#f2e43c"/><circle cx="415" cy="598.3" r="1.6" fill="#3a9de8"/><circle cx="531.7" cy="598.3" r="1.6" fill="#e03d77"/></svg>
<svg class="abs" style="left:0;top:0;font-family:'Liberation Sans',sans-serif;will-change:transform" width="700" height="622">
<text x="7.73" y="27.70" font-size="10.9" font-weight="400" textLength="68.64" lengthAdjust="spacing" fill="#7c7c7c" stroke="#7c7c7c" stroke-width="0.3">Интервал дат:</text>
<text x="80.08" y="28.00" font-size="11.0" font-weight="400" textLength="111.15" lengthAdjust="spacing" fill="#454545" stroke="#454545" stroke-width="0.2">21.11.2022 - 24.11.2022</text>
<text x="217.71" y="27.70" font-size="10.9" font-weight="400" textLength="46.55" lengthAdjust="spacing" fill="#7c7c7c" stroke="#7c7c7c" stroke-width="0.3">Фильтры:</text>
<text x="289.67" y="28.00" font-size="10.7" font-weight="400" textLength="45.99" lengthAdjust="spacing" fill="#2a2a2a" stroke="#2a2a2a" stroke-width="0.2">ФИЛЬТР...</text>
<text x="354.40" y="28.20" font-size="10.7" font-weight="400" textLength="35.24" lengthAdjust="spacing" fill="#2a2a2a" stroke="#2a2a2a" stroke-width="0.2">ФАЙЛ...</text>
<text x="19.48" y="69.00" font-size="14.0" font-weight="400" textLength="140.91" lengthAdjust="spacing" fill="#f0f0f0" stroke="#f0f0f0" stroke-width="0.35">21.11.2022 - 22.11.2022</text>
<text x="19.83" y="83.50" font-size="10.0" font-weight="400" textLength="79.07" lengthAdjust="spacing" fill="#9a9a9a" stroke="#9a9a9a" stroke-width="0.3">Активен 16ч 37м</text>
<text x="182.99" y="69.00" font-size="14.0" font-weight="400" textLength="65.26" lengthAdjust="spacing" fill="#f0f0f0" stroke="#f0f0f0" stroke-width="0.35">7 162 Руки</text>
<text x="183.52" y="83.60" font-size="10.0" font-weight="400" textLength="62.41" lengthAdjust="spacing" fill="#9a9a9a" stroke="#9a9a9a" stroke-width="0.3">431 рук в час</text>
<text x="269.25" y="69.00" font-size="14.0" font-weight="400" textLength="93.39" lengthAdjust="spacing" fill="#f0f0f0" stroke="#f0f0f0" stroke-width="0.35">Выиграл всего:</text>
<text x="370.45" y="69.00" font-size="14.0" font-weight="400" textLength="79.80" lengthAdjust="spacing" fill="#d9407a" stroke="#d9407a" stroke-width="0.35">BigBlind1,249</text>
<text x="309.91" y="83.70" font-size="10.0" font-weight="400" textLength="58.81" lengthAdjust="spacing" fill="#9a9a9a" stroke="#9a9a9a" stroke-width="0.3">Всего по EV:</text>
<text x="373.75" y="83.70" font-size="10.0" font-weight="400" textLength="76.22" lengthAdjust="spacing" fill="#d9407a" stroke="#d9407a" stroke-width="0.3">BigBlind1,094.88</text>
<text x="521.67" y="67.80" font-size="10.6" font-weight="400" textLength="42.59" lengthAdjust="spacing" fill="#9a9a9a" stroke="#9a9a9a" stroke-width="0.3">Винрейт:</text>
<text x="570.41" y="67.80" font-size="10.6" font-weight="400" textLength="25.28" lengthAdjust="spacing" fill="#d9407a" stroke="#d9407a" stroke-width="0.3">17.44</text>
<text x="597.30" y="67.80" font-size="10.6" font-weight="400" textLength="32.98" lengthAdjust="spacing" fill="#9a9a9a" stroke="#9a9a9a" stroke-width="0.3">бб/100</text>
<text x="522.23" y="82.00" font-size="10.6" font-weight="400" textLength="119.55" lengthAdjust="spacing" fill="#9a9a9a" stroke="#9a9a9a" stroke-width="0.3">4.3 среднее число столов</text>
<text x="262.55" y="601.30" font-size="9.8" font-weight="400" textLength="65.28" lengthAdjust="spacing" fill="#9c9c9c" stroke="#9c9c9c" stroke-width="0.15">Выиграл всего</text>
<text x="347.55" y="601.30" font-size="9.8" font-weight="400" textLength="52.05" lengthAdjust="spacing" fill="#9c9c9c" stroke="#9c9c9c" stroke-width="0.15">Всего по EV</text>
<text x="419.80" y="601.30" font-size="9.8" font-weight="400" textLength="96.79" lengthAdjust="spacing" fill="#9c9c9c" stroke="#9c9c9c" stroke-width="0.15">Выиграл на шоудауне</text>
<text x="535.80" y="601.30" font-size="9.8" font-weight="400" textLength="100.83" lengthAdjust="spacing" fill="#9c9c9c" stroke="#9c9c9c" stroke-width="0.15">Выиграл без шоудауна</text>
<text x="639.98" y="122.70" font-size="9.0" font-weight="400" textLength="14.55" lengthAdjust="spacing" fill="#585858" stroke="#585858" stroke-width="0.05">500</text>
<text x="639.80" y="235.70" font-size="9.0" font-weight="400" textLength="17.39" lengthAdjust="spacing" fill="#585858" stroke="#585858" stroke-width="0.05">0</text>
<text x="639.98" y="348.70" font-size="9.0" font-weight="400" textLength="14.55" lengthAdjust="spacing" fill="#585858" stroke="#585858" stroke-width="0.05">500</text>
<text x="640.33" y="461.70" font-size="9.0" font-weight="400" textLength="21.13" lengthAdjust="spacing" fill="#585858" stroke="#585858" stroke-width="0.05">1 000</text>
<text x="17.06" y="577.70" font-size="9.0" font-weight="400" textLength="13.96" lengthAdjust="spacing" fill="#585858" stroke="#585858" stroke-width="0.05">0</text>
<text x="95.04" y="577.70" font-size="9.0" font-weight="400" textLength="21.32" lengthAdjust="spacing" fill="#585858" stroke="#585858" stroke-width="0.05">1 000</text>
<text x="181.15" y="577.70" font-size="9.0" font-weight="400" textLength="21.75" lengthAdjust="spacing" fill="#585858" stroke="#585858" stroke-width="0.05">2 000</text>
<text x="267.06" y="577.70" font-size="9.0" font-weight="400" textLength="21.42" lengthAdjust="spacing" fill="#585858" stroke="#585858" stroke-width="0.05">3 000</text>
<text x="353.20" y="577.70" font-size="9.0" font-weight="400" textLength="21.77" lengthAdjust="spacing" fill="#585858" stroke="#585858" stroke-width="0.05">4 000</text>
<text x="439.64" y="577.70" font-size="9.0" font-weight="400" textLength="21.11" lengthAdjust="spacing" fill="#585858" stroke="#585858" stroke-width="0.05">5 000</text>
<text x="525.97" y="577.70" font-size="9.0" font-weight="400" textLength="20.89" lengthAdjust="spacing" fill="#585858" stroke="#585858" stroke-width="0.05">6 000</text>
<text x="611.78" y="577.70" font-size="9.0" font-weight="400" textLength="21.70" lengthAdjust="spacing" fill="#585858" stroke="#585858" stroke-width="0.05">7 000</text>
<text x="613.97" y="27.40" font-size="7.9" font-weight="700" textLength="69.78" lengthAdjust="spacing" fill="#7d7d7d" stroke="#7d7d7d" stroke-width="0.1">HAND<tspan fill="#3cb54a">2</tspan>NOTE.COM</text>
<text x="48.33" y="558.10" font-size="8.4" font-weight="700" textLength="75.24" lengthAdjust="spacing" fill="#dedede" stroke="#dedede" stroke-width="0.1">HAND<tspan fill="#3cb54a">2</tspan>NOTE.COM</text>
<rect x="365.9" y="64.5" width="4.1" height="1.4" fill="#d9407a"/><rect x="370.4" y="80.0" width="3.4" height="1.2" fill="#d9407a"/><rect x="566.9" y="64.0" width="3.2" height="1.25" fill="#d9407a"/>
</svg>
</body></html>
